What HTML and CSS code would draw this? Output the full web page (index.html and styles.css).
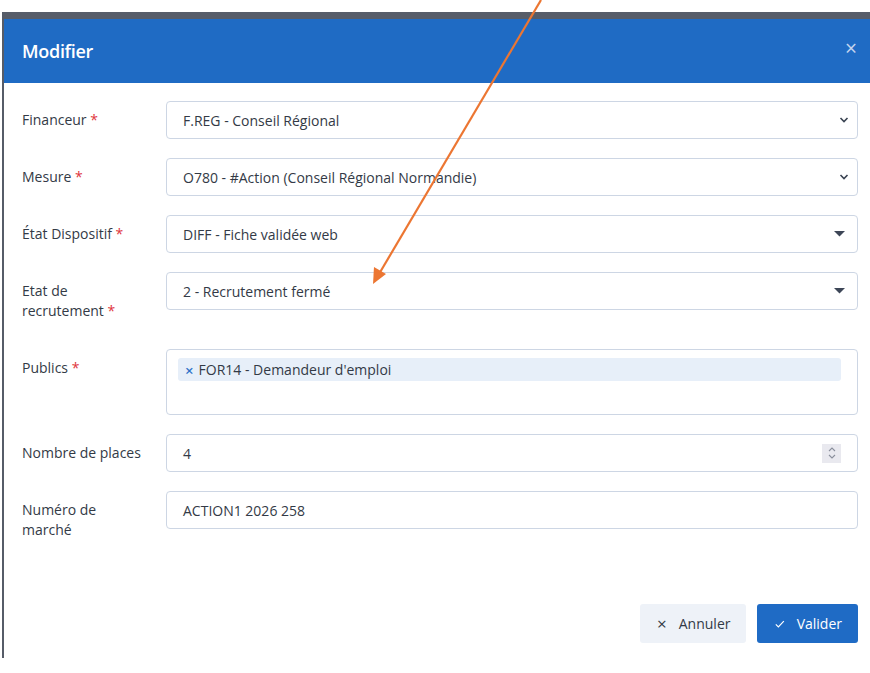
FILE: index.html
```html
<!DOCTYPE html>
<html lang="fr">
<head>
<meta charset="utf-8">
<title>Modifier</title>
<link rel="stylesheet" href="styles.css">
</head>
<body>
<div class="page">
  <div class="modal">
    <div class="modal-header">
      <h2 class="modal-title">Modifier</h2>
      <span class="modal-close">×</span>
    </div>
    <div class="modal-body">
      <div class="form-grid">
        <label class="field-label">Financeur <span class="req">*</span></label>
        <div class="control select">
          <span class="value">F.REG - Conseil Régional</span>
          <svg class="chev" width="10" height="6" viewBox="0 0 10 6"><path d="M1.5 1l3.5 3.5 3.5-3.5" fill="none" stroke="#3a4352" stroke-width="1.6"/></svg>
        </div>

        <label class="field-label">Mesure <span class="req">*</span></label>
        <div class="control select">
          <span class="value">O780 - #Action (Conseil Régional Normandie)</span>
          <svg class="chev" width="10" height="6" viewBox="0 0 10 6"><path d="M1.5 1l3.5 3.5 3.5-3.5" fill="none" stroke="#3a4352" stroke-width="1.6"/></svg>
        </div>

        <label class="field-label">État Dispositif <span class="req">*</span></label>
        <div class="control select">
          <span class="value">DIFF - Fiche validée web</span>
          <svg class="tri" width="11" height="6" viewBox="0 0 11 6"><path d="M0 0h11L5.5 5.5z" fill="#3d4657"/></svg>
        </div>

        <label class="field-label">Etat de<br>recrutement <span class="req">*</span></label>
        <div class="control select">
          <span class="value">2 - Recrutement fermé</span>
          <svg class="tri" width="11" height="6" viewBox="0 0 11 6"><path d="M0 0h11L5.5 5.5z" fill="#3d4657"/></svg>
        </div>

        <label class="field-label">Publics <span class="req">*</span></label>
        <div class="control multi">
          <span class="tag"><span class="tag-x">×</span>FOR14 - Demandeur d'emploi</span>
        </div>

        <label class="field-label">Nombre de places</label>
        <div class="control select">
          <span class="value">4</span>
          <span class="spinner">
            <svg width="8" height="14" viewBox="0 0 8 14"><path d="M1 5l3-3 3 3M1 9l3 3 3-3" fill="none" stroke="#8a8f9c" stroke-width="1.1"/></svg>
          </span>
        </div>

        <label class="field-label">Numéro de<br>marché</label>
        <div class="control select">
          <span class="value">ACTION1 2026 258</span>
        </div>
      </div>
    </div>
    <div class="modal-footer">
      <button class="btn btn-cancel"><span class="btn-icon">×</span>Annuler</button>
      <button class="btn btn-primary"><svg class="btn-check" width="12" height="10" viewBox="0 0 12 10"><path d="M1 5.5l3.2 3L11 1.5" fill="none" stroke="#fff" stroke-width="1.5"/></svg>Valider</button>
    </div>
  </div>
  <svg class="annotation" width="870" height="673" viewBox="0 0 870 673">
    <line x1="541" y1="0" x2="379" y2="274" stroke="#ec7632" stroke-width="2.2"/>
    <path d="M373 284 L374 267 L386 274 Z" fill="#ec7632"/>
  </svg>
</div>
</body>
</html>
```

FILE: styles.css
```css
html, body {
  margin: 0;
  padding: 0;
  background: #ffffff;
}

body {
  font-family: "Open Sans", "Noto Sans", Arial, sans-serif;
  color: #333a46;
  width: 870px;
  height: 673px;
  overflow: hidden;
}

.page {
  position: relative;
  width: 870px;
  height: 673px;
  padding-top: 12px;
  box-sizing: border-box;
}

.modal {
  margin-left: 2px;
  height: 646px;
  border-left: 2px solid #565c68;
  border-top: 7px solid #575d69;
  box-sizing: border-box;
  background: #fff;
  display: flex;
  flex-direction: column;
}

.modal-header {
  height: 64px;
  background: #1f6bc4;
  display: flex;
  align-items: center;
  justify-content: space-between;
  padding: 0 12px 0 18px;
}

.modal-title {
  margin: 0;
  color: #fff;
  font-size: 18px;
  font-weight: 600;
  letter-spacing: -0.3px;
}

.modal-close {
  color: #c5d5ee;
  font-size: 21px;
  line-height: 1;
  margin-top: -6px;
  margin-right: 1px;
}

.modal-body {
  padding: 18px 12px 0 18px;
}

.form-grid {
  display: grid;
  grid-template-columns: 144px 1fr;
  row-gap: 19px;
  align-items: start;
}

.field-label {
  font-size: 14px;
  line-height: 20px;
  padding: 9px 0;
  color: #333a46;
}

.req {
  color: #e0353b;
}

.control {
  border: 1px solid #cdd6e4;
  border-radius: 4px;
  box-sizing: border-box;
  font-size: 14px;
  color: #333a46;
}

.select {
  height: 38px;
  display: flex;
  align-items: center;
  justify-content: space-between;
  padding: 0 8px 0 16px;
}

.tri {
  margin-right: 4px;
}

.multi {
  height: 66px;
  padding: 8px 16px 0 11px;
}

.tag {
  display: flex;
  align-items: center;
  height: 23px;
  background: #e7eff9;
  border-radius: 3px;
  padding-left: 7px;
  font-size: 14px;
}

.tag-x {
  color: #2f72c8;
  font-size: 15px;
  font-weight: 600;
  margin-right: 5px;
}

.spinner {
  width: 19px;
  height: 19px;
  background: #e9e9ef;
  display: flex;
  align-items: center;
  justify-content: center;
  margin-right: 8px;
}

.modal-footer {
  margin-top: auto;
  display: flex;
  justify-content: flex-end;
  gap: 11px;
  padding: 0 12px 15px 0;
}

.btn {
  height: 39px;
  border: none;
  border-radius: 3px;
  font-family: inherit;
  font-size: 14px;
  display: flex;
  align-items: center;
  padding: 0 16px 0 17px;
}

.btn-cancel {
  background: #eef2f8;
  color: #333a46;
  width: 106px;
}

.btn-icon {
  font-size: 17px;
  margin-right: 12px;
}

.btn-primary {
  background: #1f6bc5;
  color: #fff;
  width: 101px;
  padding-left: 18px;
}

.btn-check {
  margin-right: 12px;
}

.annotation {
  position: absolute;
  top: 0;
  left: 0;
  pointer-events: none;
}
```
